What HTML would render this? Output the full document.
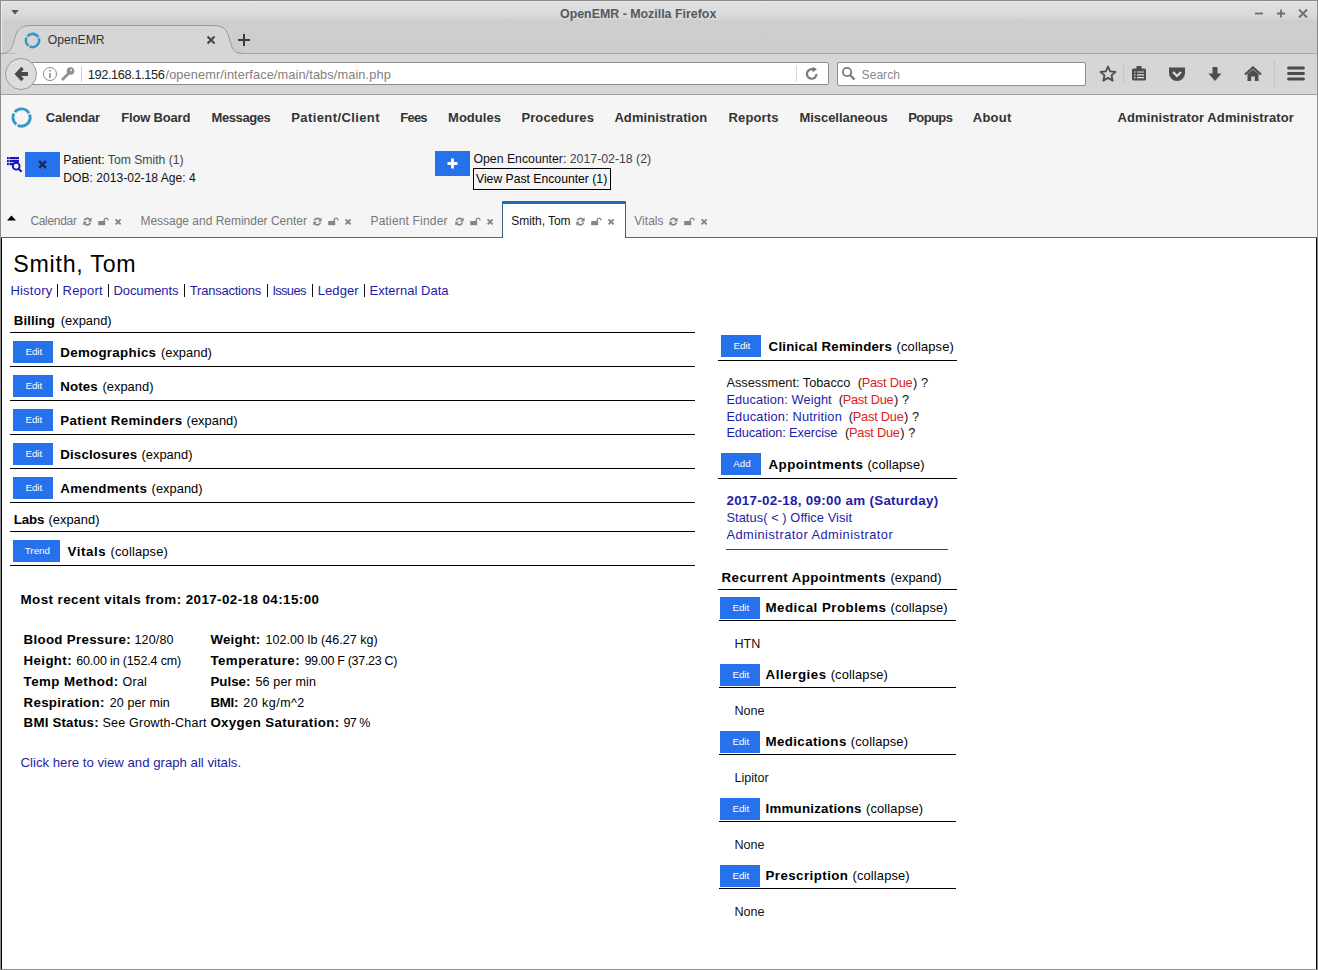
<!DOCTYPE html>
<html><head><meta charset="utf-8"><title>OpenEMR</title>
<style>
html,body{margin:0;padding:0;}
body{width:1318px;height:970px;position:relative;overflow:hidden;background:#fff;font-family:"Liberation Sans", sans-serif;}
.t{position:absolute;white-space:nowrap;}
.r{position:absolute;}
svg.r{overflow:visible;}
</style></head><body>
<div class="r" style="left:0px;top:0px;width:1318px;height:54px;background:linear-gradient(#e2e2e2 1px,#dddddd 10px,#d6d6d6 19px,#cecece 20px,#cdcdcd 53px);"></div>
<div class="r" style="left:0px;top:0px;width:1318px;height:1px;background:#8a8a8a;"></div>
<div class="r" style="left:1px;top:1px;width:1316px;height:1px;background:#e6e6e6;"></div>
<div class="r" style="left:1px;top:1px;width:1px;height:53px;background:#ececec;"></div>
<div class="r" style="left:0px;top:54px;width:1318px;height:40px;background:#d6d6d6;"></div>
<div class="r" style="left:0px;top:53px;width:16px;height:1px;background:#a6a6a6;"></div>
<div class="r" style="left:238px;top:53px;width:1080px;height:1px;background:#a6a6a6;"></div>
<div class="r" style="left:0px;top:94px;width:1318px;height:1px;background:#a0a0a0;"></div>
<div class="t" style="left:560px;top:8px;font-size:12.4px;line-height:12.4px;color:#555a5f;font-weight:bold;">OpenEMR - Mozilla Firefox</div>
<svg class="r" style="left:10px;top:9px" width="10" height="8"><path d="M1.3 1 L8.8 1 L5 5.5 Z" fill="#555"/></svg>
<svg class="r" style="left:1250px;top:5px" width="62" height="16"><path d="M5 8.5 H13" stroke="#6e6e6e" stroke-width="1.8"/><path d="M27 8.5 H35 M31 4.5 V12.5" stroke="#6e6e6e" stroke-width="1.8"/><path d="M49 4.5 L57 12.5 M57 4.5 L49 12.5" stroke="#6e6e6e" stroke-width="1.8"/></svg>
<svg class="r" style="left:0px;top:24px" width="260" height="31"><path d="M0 29.5 C10 29.5 12 25 14 17 C17 5 20 1.5 32 1.5 L212 1.5 C224 1.5 227 5 230 17 C232 25 234 29.5 244 29.5" fill="#d6d6d6" stroke="#9a9a9a" stroke-width="1"/></svg>
<div class="r" style="left:16px;top:53px;width:222px;height:1px;background:#d6d6d6;"></div>
<svg class="r" style="left:24px;top:31.5px" width="17" height="17"><g fill="none" stroke="#3597c4" stroke-width="2.6"><path d="M3.37 4.35 A6.6 6.6 0 0 1 14.22 5.20"/><path d="M14.70 6.24 A6.6 6.6 0 0 1 5.61 14.43"/><path d="M4.53 13.77 A6.6 6.6 0 0 1 2.62 5.50"/></g></svg>
<div class="t" style="left:47.7px;top:34px;font-size:12.2px;line-height:12.2px;color:#333;">OpenEMR</div>
<svg class="r" style="left:206px;top:35px" width="10" height="10"><path d="M1.5 1.5 L8.5 8.5 M8.5 1.5 L1.5 8.5" stroke="#444" stroke-width="2"/></svg>
<svg class="r" style="left:237px;top:33px" width="14" height="14"><path d="M1 7 H13 M7 1 V13" stroke="#3c3c3c" stroke-width="2"/></svg>
<div class="r" style="left:30px;top:62px;width:799px;height:23px;background:#fff;border:1px solid #8e8e8e;border-radius:2px;box-sizing:border-box;"></div>
<div class="r" style="left:5px;top:58px;width:32px;height:32px;border-radius:50%;background:#dddddd;border:1px solid #9a9a9a;box-sizing:border-box;"></div>
<svg class="r" style="left:14px;top:66px" width="18" height="16"><path d="M0.5 8 L7.3 0.7 L9.8 3.2 L7.2 5.9 H14 V10.1 H7.2 L9.8 12.8 L7.3 15.3 Z" fill="#4a4a4a"/></svg>
<svg class="r" style="left:42px;top:66px" width="16" height="16"><circle cx="8" cy="8" r="6.5" fill="none" stroke="#8a8a8a" stroke-width="1"/><rect x="7.2" y="7" width="1.6" height="5" fill="#8a8a8a"/><rect x="7.2" y="4" width="1.6" height="1.6" fill="#8a8a8a"/></svg>
<svg class="r" style="left:60px;top:66px" width="16" height="16"><circle cx="10.5" cy="5" r="3.8" fill="#8f8f8f"/><circle cx="11.2" cy="4.3" r="1" fill="#fff"/><path d="M8.5 7.5 L2 14" stroke="#8f8f8f" stroke-width="2.6"/></svg>
<div class="r" style="left:81px;top:66px;width:1px;height:16px;background:#cfcfcf;"></div>
<div class="t" style="left:87.7px;top:69px;font-size:12.8px;line-height:12.8px;color:#222;letter-spacing:-0.38px;">192.168.1.156</div>
<div class="t" style="left:165.5px;top:69px;font-size:12.8px;line-height:12.8px;color:#808080;letter-spacing:0.092px;">/openemr/interface/main/tabs/main.php</div>
<div class="r" style="left:796px;top:66px;width:1px;height:16px;background:#d6d6d6;"></div>
<svg class="r" style="left:804px;top:66px" width="16" height="16"><path d="M12.5 8 A4.8 4.8 0 1 1 9.5 3.5" fill="none" stroke="#7a7a7a" stroke-width="2.2"/><path d="M8.5 0.8 L13 3.3 L8.5 6.3 Z" fill="#7a7a7a"/></svg>
<div class="r" style="left:837px;top:62px;width:249px;height:24px;background:#fff;border:1px solid #8e8e8e;border-radius:2px;box-sizing:border-box;"></div>
<svg class="r" style="left:841px;top:66px" width="16" height="16"><circle cx="6" cy="6" r="4.2" fill="none" stroke="#777" stroke-width="1.8"/><path d="M9 9 L13.5 13.5" stroke="#777" stroke-width="2.2"/></svg>
<div class="t" style="left:861.6px;top:69px;font-size:12.1px;line-height:12.1px;color:#8a8a8a;">Search</div>
<svg class="r" style="left:1099px;top:65px" width="18" height="18"><path d="M9 1.5 L11.2 6.4 L16.5 6.9 L12.5 10.4 L13.7 15.6 L9 12.9 L4.3 15.6 L5.5 10.4 L1.5 6.9 L6.8 6.4 Z" fill="none" stroke="#4d4d4d" stroke-width="1.8" stroke-linejoin="round"/></svg>
<div class="r" style="left:1123px;top:63px;width:1px;height:21px;background:#c4c4c4;"></div>
<svg class="r" style="left:1131px;top:65px" width="16" height="17"><rect x="1" y="3.5" width="14" height="12" rx="1.5" fill="#4d4d4d"/><rect x="5.5" y="1" width="5" height="3" fill="#4d4d4d"/><path d="M3 7 H4.5 M6 7 H13 M3 9.8 H4.5 M6 9.8 H13 M3 12.6 H4.5 M6 12.6 H13" stroke="#e0e0e0" stroke-width="1.2"/></svg>
<svg class="r" style="left:1168px;top:66px" width="18" height="16"><path d="M1 1.5 H17 V7 A8 8 0 0 1 1 7 Z" fill="#4d4d4d"/><path d="M5 6 L9 10 L13 6" stroke="#e0e0e0" stroke-width="2" fill="none"/></svg>
<svg class="r" style="left:1207px;top:66px" width="16" height="16"><path d="M5.5 1 H10.5 V7.5 H14.5 L8 15 L1.5 7.5 H5.5 Z" fill="#4d4d4d"/></svg>
<svg class="r" style="left:1244px;top:66px" width="18" height="16"><path d="M1 8.5 L9 1.5 L17 8.5" stroke="#4d4d4d" stroke-width="2.2" fill="none"/><path d="M3.5 8 L9 3.5 L14.5 8 V15 H10.8 V10.5 H7.2 V15 H3.5 Z" fill="#4d4d4d"/></svg>
<div class="r" style="left:1274px;top:60px;width:1px;height:28px;background:#c4c4c4;"></div>
<svg class="r" style="left:1287px;top:66px" width="18" height="15"><path d="M1.5 2 H16.5 M1.5 7.5 H16.5 M1.5 13 H16.5" stroke="#4d4d4d" stroke-width="2.8" stroke-linecap="round"/></svg>
<div class="r" style="left:1px;top:95px;width:1316px;height:875px;background:#f5f5f5;"></div>
<div class="r" style="left:0px;top:0px;width:1px;height:970px;background:#8f8f8f;"></div>
<div class="r" style="left:1317px;top:0px;width:1px;height:970px;background:#8f8f8f;"></div>
<div class="r" style="left:0px;top:969px;width:1318px;height:1px;background:#8f8f8f;"></div>
<svg class="r" style="left:10px;top:106px" width="23" height="23"><g fill="none" stroke="#3597c4" stroke-width="2.9"><path d="M4.82 6.09 A8.6 8.6 0 0 1 18.95 7.20"/><path d="M19.58 8.56 A8.6 8.6 0 0 1 7.73 19.23"/><path d="M6.32 18.37 A8.6 8.6 0 0 1 3.84 7.60"/></g></svg>
<div class="t" style="left:45.7px;top:111px;font-size:13px;line-height:13px;color:#333;font-weight:bold;letter-spacing:-0.19px;">Calendar</div>
<div class="t" style="left:121.2px;top:111px;font-size:13px;line-height:13px;color:#333;font-weight:bold;letter-spacing:-0.175px;">Flow Board</div>
<div class="t" style="left:211.6px;top:111px;font-size:13px;line-height:13px;color:#333;font-weight:bold;letter-spacing:-0.422px;">Messages</div>
<div class="t" style="left:291.3px;top:111px;font-size:13px;line-height:13px;color:#333;font-weight:bold;letter-spacing:0.395px;">Patient/Client</div>
<div class="t" style="left:400.3px;top:111px;font-size:13px;line-height:13px;color:#333;font-weight:bold;letter-spacing:-0.777px;">Fees</div>
<div class="t" style="left:448px;top:111px;font-size:13px;line-height:13px;color:#333;font-weight:bold;letter-spacing:0.046px;">Modules</div>
<div class="t" style="left:521.4px;top:111px;font-size:13px;line-height:13px;color:#333;font-weight:bold;letter-spacing:0.107px;">Procedures</div>
<div class="t" style="left:614.4px;top:111px;font-size:13px;line-height:13px;color:#333;font-weight:bold;letter-spacing:0.09px;">Administration</div>
<div class="t" style="left:728.5px;top:111px;font-size:13px;line-height:13px;color:#333;font-weight:bold;letter-spacing:0.13px;">Reports</div>
<div class="t" style="left:799.4px;top:111px;font-size:13px;line-height:13px;color:#333;font-weight:bold;letter-spacing:-0.039px;">Miscellaneous</div>
<div class="t" style="left:908.3px;top:111px;font-size:13px;line-height:13px;color:#333;font-weight:bold;letter-spacing:-0.613px;">Popups</div>
<div class="t" style="left:972.8px;top:111px;font-size:13px;line-height:13px;color:#333;font-weight:bold;letter-spacing:0.24px;">About</div>
<div class="t" style="left:1117.6px;top:111px;font-size:13px;line-height:13px;color:#333;font-weight:bold;letter-spacing:0.1px;">Administrator Administrator</div>
<svg class="r" style="left:6px;top:156px" width="17" height="17"><g fill="#1414c8"><rect x="1" y="1" width="1.8" height="2.2"/><rect x="3.4" y="1" width="9.6" height="2.2"/><rect x="1" y="4" width="1.8" height="2.2"/><rect x="3.4" y="4" width="9.6" height="2.2"/><rect x="1" y="7" width="1.8" height="2.2"/><rect x="3.4" y="7" width="4" height="2.2"/></g><circle cx="10.2" cy="10.2" r="3.4" fill="none" stroke="#1414c8" stroke-width="1.9"/><path d="M12.6 12.8 L15.6 15.8" stroke="#1414c8" stroke-width="2.1"/></svg>
<div class="r" style="left:25px;top:152px;width:35px;height:25px;background:#2672ec;"></div>
<svg class="r" style="left:37px;top:159px" width="11" height="11"><path d="M2.2 2.2 L8.8 8.8 M8.8 2.2 L2.2 8.8" stroke="#1f2a44" stroke-width="2.4"/></svg>
<div class="t" style="left:63.3px;top:154px;font-size:12.2px;line-height:12.2px;color:#111;">Patient: <span style="color:#444">Tom Smith (1)</span></div>
<div class="t" style="left:63.3px;top:172px;font-size:12.1px;line-height:12.1px;color:#111;">DOB: 2013-02-18 Age: 4</div>
<div class="r" style="left:435px;top:151px;width:35px;height:25px;background:#2672ec;"></div>
<svg class="r" style="left:446px;top:157px" width="13" height="13"><path d="M1.5 6.5 H11.5 M6.5 1.5 V11.5" stroke="#fff" stroke-width="2.8"/></svg>
<div class="t" style="left:473.4px;top:153px;font-size:12.3px;line-height:12.3px;color:#111;">Open Encounter: <span style="color:#444">2017-02-18 (2)</span></div>
<div class="r" style="left:473px;top:168px;width:138px;height:22px;border:1px solid #000;box-sizing:border-box;"></div>
<div class="t" style="left:476px;top:173px;font-size:12.2px;line-height:12.2px;color:#000;">View Past Encounter (1)</div>
<svg class="r" style="left:7px;top:215px" width="9" height="6"><path d="M0 5.5 L4.5 0.5 L9 5.5 Z" fill="#000"/></svg>
<div class="t" style="left:30.4px;top:215px;font-size:12px;line-height:12px;color:#777;letter-spacing:-0.314px;">Calendar</div>
<svg class="r" style="left:83px;top:217px" width="40" height="10"><path d="M1.3 3.6 A3.4 3.4 0 0 1 7.2 2.6 M7.4 5.6 A3.4 3.4 0 0 1 1.5 6.6" fill="none" stroke="#858585" stroke-width="1.7"/><path d="M8.6 0.6 V4.4 H4.8 Z M0.2 8.6 V4.8 H4 Z" fill="#858585"/><rect x="15.2" y="4" width="7" height="4.2" fill="#858585"/><path d="M21.2 4 V2.6 A2 2 0 0 1 25 2.6 V3.6" fill="none" stroke="#858585" stroke-width="1.3"/><path d="M32.6 2.4 L37.6 7.4 M37.6 2.4 L32.6 7.4" stroke="#858585" stroke-width="1.9"/></svg>
<div class="t" style="left:140.4px;top:215px;font-size:12px;line-height:12px;color:#777;letter-spacing:-0.01px;">Message and Reminder Center</div>
<svg class="r" style="left:312.5px;top:217px" width="40" height="10"><path d="M1.3 3.6 A3.4 3.4 0 0 1 7.2 2.6 M7.4 5.6 A3.4 3.4 0 0 1 1.5 6.6" fill="none" stroke="#858585" stroke-width="1.7"/><path d="M8.6 0.6 V4.4 H4.8 Z M0.2 8.6 V4.8 H4 Z" fill="#858585"/><rect x="15.2" y="4" width="7" height="4.2" fill="#858585"/><path d="M21.2 4 V2.6 A2 2 0 0 1 25 2.6 V3.6" fill="none" stroke="#858585" stroke-width="1.3"/><path d="M32.6 2.4 L37.6 7.4 M37.6 2.4 L32.6 7.4" stroke="#858585" stroke-width="1.9"/></svg>
<div class="t" style="left:370.5px;top:215px;font-size:12px;line-height:12px;color:#777;letter-spacing:0.176px;">Patient Finder</div>
<svg class="r" style="left:455px;top:217px" width="40" height="10"><path d="M1.3 3.6 A3.4 3.4 0 0 1 7.2 2.6 M7.4 5.6 A3.4 3.4 0 0 1 1.5 6.6" fill="none" stroke="#858585" stroke-width="1.7"/><path d="M8.6 0.6 V4.4 H4.8 Z M0.2 8.6 V4.8 H4 Z" fill="#858585"/><rect x="15.2" y="4" width="7" height="4.2" fill="#858585"/><path d="M21.2 4 V2.6 A2 2 0 0 1 25 2.6 V3.6" fill="none" stroke="#858585" stroke-width="1.3"/><path d="M32.6 2.4 L37.6 7.4 M37.6 2.4 L32.6 7.4" stroke="#858585" stroke-width="1.9"/></svg>
<div class="r" style="left:502px;top:201px;width:124px;height:37px;background:#fff;border:1px solid #35648f;border-top:3px solid #1f6ebd;border-bottom:none;box-sizing:border-box;"></div>
<div class="t" style="left:511.3px;top:215px;font-size:12px;line-height:12px;color:#111;letter-spacing:-0.055px;">Smith, Tom</div>
<svg class="r" style="left:575.5px;top:217px" width="40" height="10"><path d="M1.3 3.6 A3.4 3.4 0 0 1 7.2 2.6 M7.4 5.6 A3.4 3.4 0 0 1 1.5 6.6" fill="none" stroke="#858585" stroke-width="1.7"/><path d="M8.6 0.6 V4.4 H4.8 Z M0.2 8.6 V4.8 H4 Z" fill="#858585"/><rect x="15.2" y="4" width="7" height="4.2" fill="#858585"/><path d="M21.2 4 V2.6 A2 2 0 0 1 25 2.6 V3.6" fill="none" stroke="#858585" stroke-width="1.3"/><path d="M32.6 2.4 L37.6 7.4 M37.6 2.4 L32.6 7.4" stroke="#858585" stroke-width="1.9"/></svg>
<div class="t" style="left:634.2px;top:215px;font-size:12px;line-height:12px;color:#777;letter-spacing:0.054px;">Vitals</div>
<svg class="r" style="left:669px;top:217px" width="40" height="10"><path d="M1.3 3.6 A3.4 3.4 0 0 1 7.2 2.6 M7.4 5.6 A3.4 3.4 0 0 1 1.5 6.6" fill="none" stroke="#858585" stroke-width="1.7"/><path d="M8.6 0.6 V4.4 H4.8 Z M0.2 8.6 V4.8 H4 Z" fill="#858585"/><rect x="15.2" y="4" width="7" height="4.2" fill="#858585"/><path d="M21.2 4 V2.6 A2 2 0 0 1 25 2.6 V3.6" fill="none" stroke="#858585" stroke-width="1.3"/><path d="M32.6 2.4 L37.6 7.4 M37.6 2.4 L32.6 7.4" stroke="#858585" stroke-width="1.9"/></svg>
<div class="r" style="left:1px;top:237px;width:501px;height:1px;background:#3672a6;"></div>
<div class="r" style="left:626px;top:237px;width:691px;height:1px;background:#3672a6;"></div>
<div class="r" style="left:1px;top:238px;width:1316px;height:731px;background:#fff;"></div>
<div class="r" style="left:1px;top:238px;width:1px;height:731px;background:#000;"></div>
<div class="r" style="left:1316px;top:238px;width:1px;height:731px;background:#000;"></div>
<div class="t" style="left:13.3px;top:253px;font-size:23.2px;line-height:23.2px;color:#000;letter-spacing:0.755px;">Smith, Tom</div>
<div class="t" style="left:10.4px;top:284px;font-size:13px;line-height:13px;color:#1d1da6;letter-spacing:0.225px;">History</div>
<div class="t" style="left:62.6px;top:284px;font-size:13px;line-height:13px;color:#1d1da6;letter-spacing:0.196px;">Report</div>
<div class="t" style="left:113.5px;top:284px;font-size:13px;line-height:13px;color:#1d1da6;letter-spacing:-0.094px;">Documents</div>
<div class="t" style="left:189.8px;top:284px;font-size:13px;line-height:13px;color:#1d1da6;letter-spacing:-0.222px;">Transactions</div>
<div class="t" style="left:272.4px;top:284px;font-size:13px;line-height:13px;color:#1d1da6;letter-spacing:-0.714px;">Issues</div>
<div class="t" style="left:317.7px;top:284px;font-size:13px;line-height:13px;color:#1d1da6;letter-spacing:0.104px;">Ledger</div>
<div class="t" style="left:369.5px;top:284px;font-size:13px;line-height:13px;color:#1d1da6;letter-spacing:0.02px;">External Data</div>
<div class="r" style="left:57px;top:284px;width:1px;height:13px;background:#111;"></div>
<div class="r" style="left:108px;top:284px;width:1px;height:13px;background:#111;"></div>
<div class="r" style="left:184px;top:284px;width:1px;height:13px;background:#111;"></div>
<div class="r" style="left:267px;top:284px;width:1px;height:13px;background:#111;"></div>
<div class="r" style="left:312px;top:284px;width:1px;height:13px;background:#111;"></div>
<div class="r" style="left:364px;top:284px;width:1px;height:13px;background:#111;"></div>
<div class="r" style="left:10px;top:332px;width:685px;height:1px;background:#000;"></div>
<div class="t" style="left:13.7px;top:314px;font-size:13.3px;line-height:13.3px;color:#000;font-weight:bold;letter-spacing:0.111px;">Billing</div>
<div class="t" style="left:60.7px;top:315px;font-size:12.9px;line-height:12.9px;color:#000;letter-spacing:0.012px;">(expand)</div>
<div class="r" style="left:13px;top:341px;width:40px;height:22px;background:#2672ec;"></div>
<div class="t" style="left:25.4px;top:347px;font-size:9.8px;line-height:9.8px;color:#fff;">Edit</div>
<div class="t" style="left:60.3px;top:346px;font-size:13.3px;line-height:13.3px;color:#000;font-weight:bold;letter-spacing:0.301px;">Demographics</div>
<div class="t" style="left:160.9px;top:347px;font-size:12.9px;line-height:12.9px;color:#000;letter-spacing:0.012px;">(expand)</div>
<div class="r" style="left:10px;top:366px;width:685px;height:1px;background:#000;"></div>
<div class="r" style="left:13px;top:375px;width:40px;height:22px;background:#2672ec;"></div>
<div class="t" style="left:25.4px;top:381px;font-size:9.8px;line-height:9.8px;color:#fff;">Edit</div>
<div class="t" style="left:60.3px;top:380px;font-size:13.3px;line-height:13.3px;color:#000;font-weight:bold;letter-spacing:0.112px;">Notes</div>
<div class="t" style="left:102.5px;top:381px;font-size:12.9px;line-height:12.9px;color:#000;letter-spacing:0.012px;">(expand)</div>
<div class="r" style="left:10px;top:400px;width:685px;height:1px;background:#000;"></div>
<div class="r" style="left:13px;top:409px;width:40px;height:22px;background:#2672ec;"></div>
<div class="t" style="left:25.4px;top:415px;font-size:9.8px;line-height:9.8px;color:#fff;">Edit</div>
<div class="t" style="left:60.3px;top:414px;font-size:13.3px;line-height:13.3px;color:#000;font-weight:bold;letter-spacing:0.314px;">Patient Reminders</div>
<div class="t" style="left:186.6px;top:415px;font-size:12.9px;line-height:12.9px;color:#000;letter-spacing:0.012px;">(expand)</div>
<div class="r" style="left:10px;top:434px;width:685px;height:1px;background:#000;"></div>
<div class="r" style="left:13px;top:443px;width:40px;height:22px;background:#2672ec;"></div>
<div class="t" style="left:25.4px;top:449px;font-size:9.8px;line-height:9.8px;color:#fff;">Edit</div>
<div class="t" style="left:60.3px;top:448px;font-size:13.3px;line-height:13.3px;color:#000;font-weight:bold;letter-spacing:0.14px;">Disclosures</div>
<div class="t" style="left:141.5px;top:449px;font-size:12.9px;line-height:12.9px;color:#000;letter-spacing:0.012px;">(expand)</div>
<div class="r" style="left:10px;top:468px;width:685px;height:1px;background:#000;"></div>
<div class="r" style="left:13px;top:477px;width:40px;height:22px;background:#2672ec;"></div>
<div class="t" style="left:25.4px;top:483px;font-size:9.8px;line-height:9.8px;color:#fff;">Edit</div>
<div class="t" style="left:60.3px;top:482px;font-size:13.3px;line-height:13.3px;color:#000;font-weight:bold;letter-spacing:0.261px;">Amendments</div>
<div class="t" style="left:151.6px;top:483px;font-size:12.9px;line-height:12.9px;color:#000;letter-spacing:0.012px;">(expand)</div>
<div class="r" style="left:10px;top:502px;width:685px;height:1px;background:#000;"></div>
<div class="r" style="left:10px;top:531px;width:685px;height:1px;background:#000;"></div>
<div class="t" style="left:13.7px;top:513px;font-size:13.3px;line-height:13.3px;color:#000;font-weight:bold;letter-spacing:-0.148px;">Labs</div>
<div class="t" style="left:48.5px;top:514px;font-size:12.9px;line-height:12.9px;color:#000;letter-spacing:0.012px;">(expand)</div>
<div class="r" style="left:13px;top:540px;width:47px;height:22px;background:#2672ec;"></div>
<div class="t" style="left:24.75px;top:546px;font-size:9.8px;line-height:9.8px;color:#fff;">Trend</div>
<div class="t" style="left:67.4px;top:545px;font-size:13.3px;line-height:13.3px;color:#000;font-weight:bold;letter-spacing:0.611px;">Vitals</div>
<div class="t" style="left:110.6px;top:546px;font-size:12.9px;line-height:12.9px;color:#000;letter-spacing:0.142px;">(collapse)</div>
<div class="r" style="left:10px;top:565px;width:685px;height:1px;background:#000;"></div>
<div class="t" style="left:20.5px;top:593px;font-size:13.4px;line-height:13.4px;color:#000;font-weight:bold;letter-spacing:0.416px;">Most recent vitals from: 2017-02-18 04:15:00</div>
<div class="t" style="left:23.6px;top:633px;font-size:13.3px;line-height:13.3px;color:#000;font-weight:bold;letter-spacing:0.305px;">Blood Pressure:</div>
<div class="t" style="left:134.5px;top:634px;font-size:12.5px;line-height:12.5px;color:#000;letter-spacing:0.153px;">120/80</div>
<div class="t" style="left:210.4px;top:633px;font-size:13.3px;line-height:13.3px;color:#000;font-weight:bold;letter-spacing:0.215px;">Weight:</div>
<div class="t" style="left:265.6px;top:634px;font-size:12.5px;line-height:12.5px;color:#000;letter-spacing:0.043px;">102.00 lb (46.27 kg)</div>
<div class="t" style="left:23.6px;top:654px;font-size:13.3px;line-height:13.3px;color:#000;font-weight:bold;letter-spacing:0.366px;">Height:</div>
<div class="t" style="left:76.2px;top:655px;font-size:12.5px;line-height:12.5px;color:#000;letter-spacing:-0.15px;">60.00 in (152.4 cm)</div>
<div class="t" style="left:210.4px;top:654px;font-size:13.3px;line-height:13.3px;color:#000;font-weight:bold;letter-spacing:0.472px;">Temperature:</div>
<div class="t" style="left:304.4px;top:655px;font-size:12.5px;line-height:12.5px;color:#000;letter-spacing:-0.311px;">99.00 F (37.23 C)</div>
<div class="t" style="left:23.6px;top:675px;font-size:13.3px;line-height:13.3px;color:#000;font-weight:bold;letter-spacing:0.437px;">Temp Method:</div>
<div class="t" style="left:122.6px;top:676px;font-size:12.5px;line-height:12.5px;color:#000;letter-spacing:0.228px;">Oral</div>
<div class="t" style="left:210.4px;top:675px;font-size:13.3px;line-height:13.3px;color:#000;font-weight:bold;letter-spacing:0.017px;">Pulse:</div>
<div class="t" style="left:255.4px;top:676px;font-size:12.5px;line-height:12.5px;color:#000;letter-spacing:0.171px;">56 per min</div>
<div class="t" style="left:23.6px;top:696px;font-size:13.3px;line-height:13.3px;color:#000;font-weight:bold;letter-spacing:0.291px;">Respiration:</div>
<div class="t" style="left:109.8px;top:697px;font-size:12.5px;line-height:12.5px;color:#000;letter-spacing:0.104px;">20 per min</div>
<div class="t" style="left:210.4px;top:696px;font-size:13.3px;line-height:13.3px;color:#000;font-weight:bold;letter-spacing:-0.27px;">BMI:</div>
<div class="t" style="left:243.3px;top:697px;font-size:12.5px;line-height:12.5px;color:#000;letter-spacing:0.465px;">20 kg/m^2</div>
<div class="t" style="left:23.6px;top:716px;font-size:13.3px;line-height:13.3px;color:#000;font-weight:bold;letter-spacing:0.185px;">BMI Status:</div>
<div class="t" style="left:102.5px;top:717px;font-size:12.5px;line-height:12.5px;color:#000;letter-spacing:0.218px;">See Growth-Chart</div>
<div class="t" style="left:210.4px;top:716px;font-size:13.3px;line-height:13.3px;color:#000;font-weight:bold;letter-spacing:0.354px;">Oxygen Saturation:</div>
<div class="t" style="left:343.4px;top:717px;font-size:12.5px;line-height:12.5px;color:#000;letter-spacing:-0.497px;">97 %</div>
<div class="t" style="left:20.5px;top:756px;font-size:13.2px;line-height:13.2px;color:#1d1da6;">Click here to view and graph all vitals.</div>
<div class="r" style="left:721px;top:335px;width:40px;height:22px;background:#2672ec;"></div>
<div class="t" style="left:733.4px;top:341px;font-size:9.8px;line-height:9.8px;color:#fff;">Edit</div>
<div class="t" style="left:768.6px;top:340px;font-size:13.3px;line-height:13.3px;color:#000;font-weight:bold;letter-spacing:0.209px;">Clinical Reminders</div>
<div class="t" style="left:896.6px;top:341px;font-size:12.9px;line-height:12.9px;color:#000;letter-spacing:0.142px;">(collapse)</div>
<div class="r" style="left:718px;top:360px;width:239px;height:1px;background:#000;"></div>
<div class="t" style="left:726.4px;top:377px;font-size:12.8px;line-height:12.8px;color:#111;letter-spacing:-0.015px;">Assessment: Tobacco</div>
<div class="t" style="left:857.7px;top:377px;font-size:12.8px;line-height:12.8px;color:#111;">(</div>
<div class="t" style="left:861.7px;top:377px;font-size:12.8px;line-height:12.8px;color:#e02020;letter-spacing:-0.236px;">Past Due</div>
<div class="t" style="left:913.0px;top:377px;font-size:12.8px;line-height:12.8px;color:#111;">)</div>
<div class="t" style="left:920.9000000000001px;top:377px;font-size:12.8px;line-height:12.8px;color:#111;">?</div>
<div class="t" style="left:726.4px;top:394px;font-size:12.8px;line-height:12.8px;color:#1d1da6;letter-spacing:0.103px;">Education: Weight</div>
<div class="t" style="left:838.7px;top:394px;font-size:12.8px;line-height:12.8px;color:#111;">(</div>
<div class="t" style="left:842.7px;top:394px;font-size:12.8px;line-height:12.8px;color:#e02020;letter-spacing:-0.236px;">Past Due</div>
<div class="t" style="left:894.0px;top:394px;font-size:12.8px;line-height:12.8px;color:#111;">)</div>
<div class="t" style="left:901.9000000000001px;top:394px;font-size:12.8px;line-height:12.8px;color:#111;">?</div>
<div class="t" style="left:726.4px;top:411px;font-size:12.8px;line-height:12.8px;color:#1d1da6;letter-spacing:0.194px;">Education: Nutrition</div>
<div class="t" style="left:848.8px;top:411px;font-size:12.8px;line-height:12.8px;color:#111;">(</div>
<div class="t" style="left:852.8px;top:411px;font-size:12.8px;line-height:12.8px;color:#e02020;letter-spacing:-0.236px;">Past Due</div>
<div class="t" style="left:904.0999999999999px;top:411px;font-size:12.8px;line-height:12.8px;color:#111;">)</div>
<div class="t" style="left:912.0px;top:411px;font-size:12.8px;line-height:12.8px;color:#111;">?</div>
<div class="t" style="left:726.4px;top:427px;font-size:12.8px;line-height:12.8px;color:#1d1da6;letter-spacing:-0.118px;">Education: Exercise</div>
<div class="t" style="left:845px;top:427px;font-size:12.8px;line-height:12.8px;color:#111;">(</div>
<div class="t" style="left:849px;top:427px;font-size:12.8px;line-height:12.8px;color:#e02020;letter-spacing:-0.236px;">Past Due</div>
<div class="t" style="left:900.3px;top:427px;font-size:12.8px;line-height:12.8px;color:#111;">)</div>
<div class="t" style="left:908.2px;top:427px;font-size:12.8px;line-height:12.8px;color:#111;">?</div>
<div class="r" style="left:721px;top:453px;width:40px;height:22px;background:#2672ec;"></div>
<div class="t" style="left:733.2px;top:459px;font-size:9.8px;line-height:9.8px;color:#fff;">Add</div>
<div class="t" style="left:768.5px;top:458px;font-size:13.3px;line-height:13.3px;color:#000;font-weight:bold;letter-spacing:0.464px;">Appointments</div>
<div class="t" style="left:867.4px;top:459px;font-size:12.9px;line-height:12.9px;color:#000;letter-spacing:0.142px;">(collapse)</div>
<div class="r" style="left:718px;top:478px;width:239px;height:1px;background:#000;"></div>
<div class="t" style="left:726.4px;top:494px;font-size:13.4px;line-height:13.4px;color:#1d1da6;font-weight:bold;letter-spacing:0.288px;">2017-02-18, 09:00 am (Saturday)</div>
<div class="t" style="left:726.4px;top:512px;font-size:12.8px;line-height:12.8px;color:#1d1da6;letter-spacing:0.084px;">Status( &lt; ) Office Visit</div>
<div class="t" style="left:726.4px;top:529px;font-size:12.8px;line-height:12.8px;color:#1d1da6;letter-spacing:0.49px;">Administrator Administrator</div>
<div class="r" style="left:726px;top:549px;width:222px;height:1px;background:#444;"></div>
<div class="t" style="left:721.6px;top:571px;font-size:13.3px;line-height:13.3px;color:#000;font-weight:bold;letter-spacing:0.408px;">Recurrent Appointments</div>
<div class="t" style="left:890.5px;top:572px;font-size:12.9px;line-height:12.9px;color:#000;letter-spacing:0.012px;">(expand)</div>
<div class="r" style="left:718px;top:589px;width:239px;height:1px;background:#000;"></div>
<div class="r" style="left:720px;top:597px;width:40px;height:21.5px;background:#2672ec;"></div>
<div class="t" style="left:732.4px;top:603px;font-size:9.8px;line-height:9.8px;color:#fff;">Edit</div>
<div class="t" style="left:765.5px;top:601px;font-size:13.3px;line-height:13.3px;color:#000;font-weight:bold;letter-spacing:0.494px;">Medical Problems</div>
<div class="t" style="left:890.5px;top:602px;font-size:12.9px;line-height:12.9px;color:#000;letter-spacing:0.142px;">(collapse)</div>
<div class="r" style="left:719px;top:620px;width:237px;height:1px;background:#000;"></div>
<div class="t" style="left:734.5px;top:638px;font-size:12.6px;line-height:12.6px;color:#111;">HTN</div>
<div class="r" style="left:720px;top:664px;width:40px;height:21.5px;background:#2672ec;"></div>
<div class="t" style="left:732.4px;top:670px;font-size:9.8px;line-height:9.8px;color:#fff;">Edit</div>
<div class="t" style="left:765.5px;top:668px;font-size:13.3px;line-height:13.3px;color:#000;font-weight:bold;letter-spacing:0.565px;">Allergies</div>
<div class="t" style="left:830.7px;top:669px;font-size:12.9px;line-height:12.9px;color:#000;letter-spacing:0.142px;">(collapse)</div>
<div class="r" style="left:719px;top:687px;width:237px;height:1px;background:#000;"></div>
<div class="t" style="left:734.5px;top:705px;font-size:12.6px;line-height:12.6px;color:#111;">None</div>
<div class="r" style="left:720px;top:731px;width:40px;height:21.5px;background:#2672ec;"></div>
<div class="t" style="left:732.4px;top:737px;font-size:9.8px;line-height:9.8px;color:#fff;">Edit</div>
<div class="t" style="left:765.5px;top:735px;font-size:13.3px;line-height:13.3px;color:#000;font-weight:bold;letter-spacing:0.394px;">Medications</div>
<div class="t" style="left:850.8px;top:736px;font-size:12.9px;line-height:12.9px;color:#000;letter-spacing:0.142px;">(collapse)</div>
<div class="r" style="left:719px;top:754px;width:237px;height:1px;background:#000;"></div>
<div class="t" style="left:734.5px;top:772px;font-size:12.6px;line-height:12.6px;color:#111;">Lipitor</div>
<div class="r" style="left:720px;top:798px;width:40px;height:21.5px;background:#2672ec;"></div>
<div class="t" style="left:732.4px;top:804px;font-size:9.8px;line-height:9.8px;color:#fff;">Edit</div>
<div class="t" style="left:765.5px;top:802px;font-size:13.3px;line-height:13.3px;color:#000;font-weight:bold;letter-spacing:0.241px;">Immunizations</div>
<div class="t" style="left:866.0px;top:803px;font-size:12.9px;line-height:12.9px;color:#000;letter-spacing:0.142px;">(collapse)</div>
<div class="r" style="left:719px;top:821px;width:237px;height:1px;background:#000;"></div>
<div class="t" style="left:734.5px;top:839px;font-size:12.6px;line-height:12.6px;color:#111;">None</div>
<div class="r" style="left:720px;top:865px;width:40px;height:21.5px;background:#2672ec;"></div>
<div class="t" style="left:732.4px;top:871px;font-size:9.8px;line-height:9.8px;color:#fff;">Edit</div>
<div class="t" style="left:765.5px;top:869px;font-size:13.3px;line-height:13.3px;color:#000;font-weight:bold;letter-spacing:0.445px;">Prescription</div>
<div class="t" style="left:852.5px;top:870px;font-size:12.9px;line-height:12.9px;color:#000;letter-spacing:0.142px;">(collapse)</div>
<div class="r" style="left:719px;top:888px;width:237px;height:1px;background:#000;"></div>
<div class="t" style="left:734.5px;top:906px;font-size:12.6px;line-height:12.6px;color:#111;">None</div>
</body></html>
